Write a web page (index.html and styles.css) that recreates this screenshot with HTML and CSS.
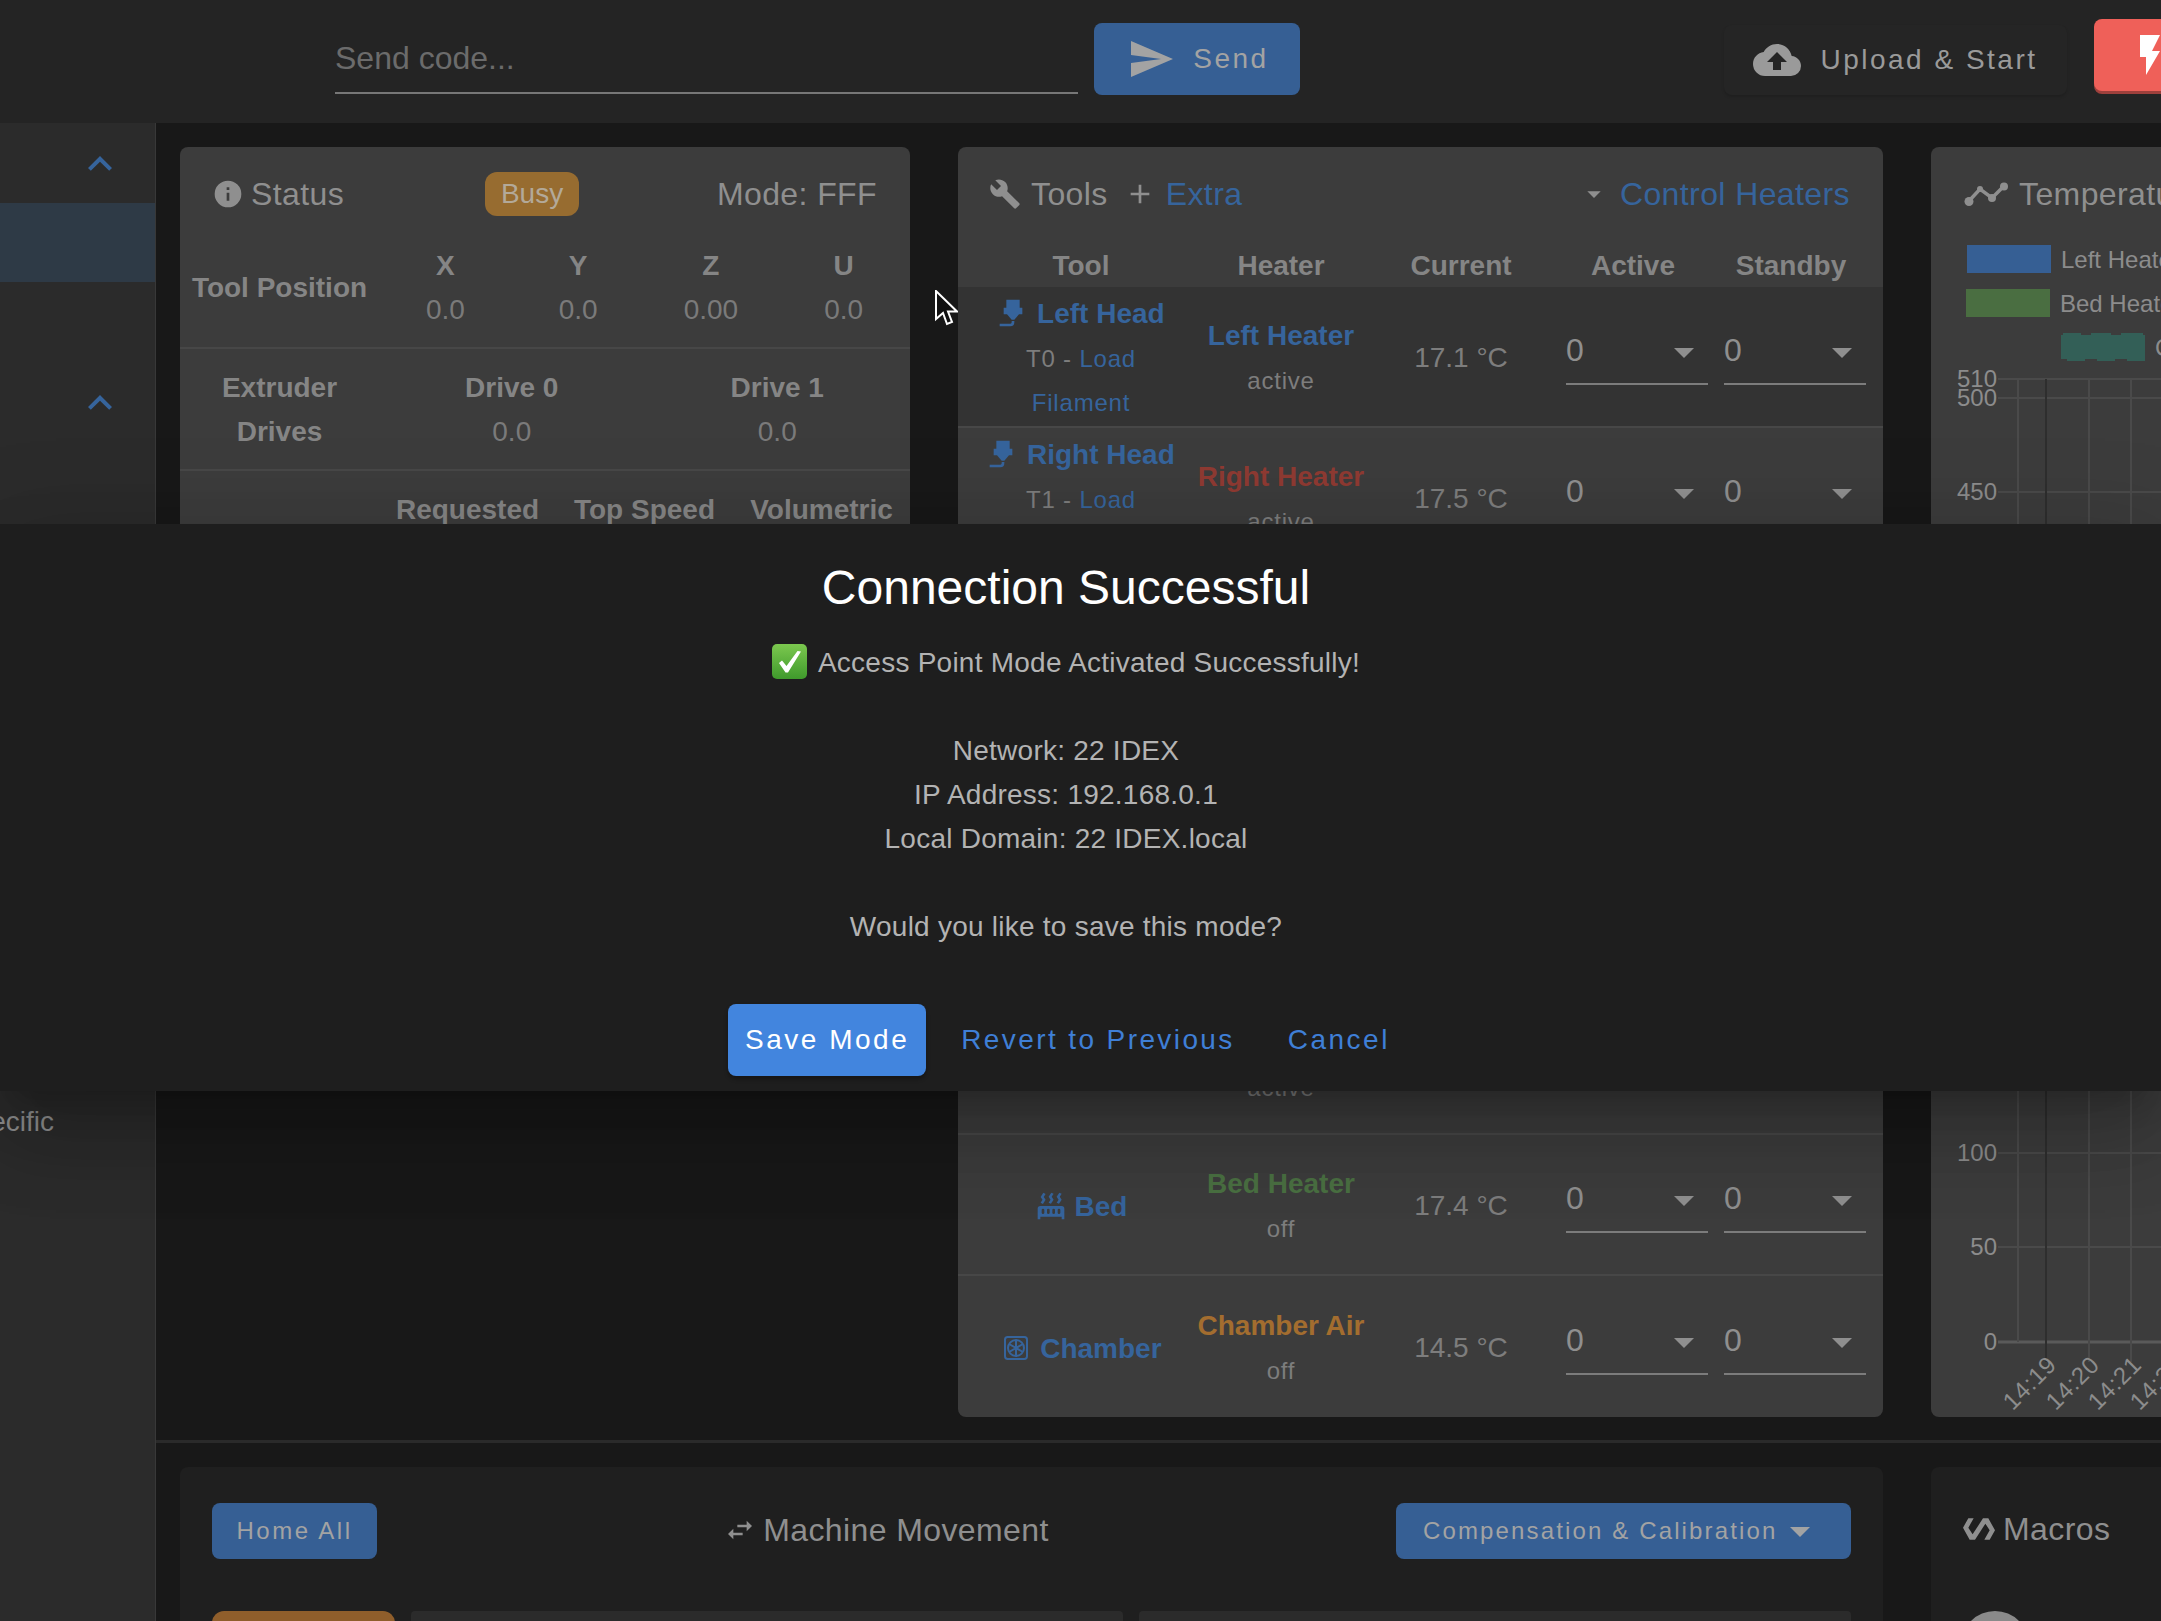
FILE: index.html
```html
<!DOCTYPE html>
<html>
<head>
	<meta charset="UTF-8">
	<title>Printer Dashboard</title>
	<link rel="stylesheet" href="styles.css">
</head>
<body>

	<div class="topbar">
		<div class="code_input">Send code...</div>
		<div class="btn send_btn">
			<svg class="icon icon48" viewBox="0 0 24 24"><path d="M2,21L23,12L2,3V10L17,12L2,14V21Z"/></svg>
			<span>Send</span>
		</div>
		<div class="btn upload_btn">
			<svg class="icon icon48" viewBox="0 0 24 24"><path d="M14,13V17H10V13H7L12,8L17,13M19.35,10.03C18.67,6.59 15.64,4 12,4C9.11,4 6.6,5.64 5.35,8.03C2.34,8.36 0,10.9 0,14A6,6 0 0,0 6,20H19A5,5 0 0,0 24,15C24,12.36 21.95,10.22 19.35,10.03Z"/></svg>
			<span>Upload &amp; Start</span>
		</div>
		<div class="btn stop_btn">
			<svg class="icon icon48" viewBox="0 0 24 24"><path d="M7,2V13H10V22L17,10H13L17,2H7Z"/></svg>
		</div>
	</div>

	<div class="page">
		<div class="sidebar">
			<svg class="icon icon48 side_chevron" viewBox="0 0 24 24"><path d="M7.41,15.41L12,10.83L16.59,15.41L18,14L12,8L6,14L7.41,15.41Z"/></svg>
			<div class="side_active"></div>
			<svg class="icon icon48 side_chevron second" viewBox="0 0 24 24"><path d="M7.41,15.41L12,10.83L16.59,15.41L18,14L12,8L6,14L7.41,15.41Z"/></svg>
			<div class="side_label"><span>Machine-Specific</span></div>
		</div>

		<div class="content">
			<div class="top_grid">

				<div class="card status_card">
					<div class="card_head">
						<div class="title">
							<svg class="icon icon32" viewBox="0 0 24 24"><path d="M13,9H11V7H13M13,17H11V11H13M12,2A10,10 0 0,0 2,12A10,10 0 0,0 12,22A10,10 0 0,0 22,12A10,10 0 0,0 12,2Z"/></svg>
							<span class="status_text">Status</span>
						</div>
						<div class="chip">Busy</div>
						<div class="title">Mode: FFF</div>
					</div>
					<div class="status_row pos_row">
						<div class="th row_name">Tool Position</div>
						<div class="cell"><div class="th">X</div><div class="val">0.0</div></div>
						<div class="cell"><div class="th">Y</div><div class="val">0.0</div></div>
						<div class="cell"><div class="th">Z</div><div class="val">0.00</div></div>
						<div class="cell"><div class="th">U</div><div class="val">0.0</div></div>
					</div>
					<div class="status_row drive_row">
						<div class="th row_name">Extruder<br>Drives</div>
						<div class="cell"><div class="th">Drive 0</div><div class="val">0.0</div></div>
						<div class="cell"><div class="th">Drive 1</div><div class="val">0.0</div></div>
					</div>
					<div class="status_row speed_row">
						<div></div>
						<div class="cell"><div class="th">Requested</div></div>
						<div class="cell"><div class="th">Top Speed</div></div>
						<div class="cell"><div class="th">Volumetric</div></div>
					</div>
				</div>

				<div class="card">
					<div class="card_head tools_head">
						<div class="title">
							<svg class="icon icon32" viewBox="0 0 24 24"><path d="M22.7,19L13.6,9.9C14.5,7.6 14,4.9 12.1,3C10.1,1 7.1,0.6 4.7,1.7L9,6L6,9L1.6,4.7C0.4,7.1 0.9,10.1 2.9,12.1C4.8,14 7.5,14.5 9.8,13.6L18.9,22.7C19.3,23.1 19.9,23.1 20.3,22.7L22.6,20.4C23.1,20 23.1,19.3 22.7,19Z"/></svg>
							<span class="tools_text">Tools</span>
							<svg class="icon icon32 plus" viewBox="0 0 24 24"><path d="M19,13H13V19H11V13H5V11H11V5H13V11H19V13Z"/></svg>
							<span class="link extra">Extra</span>
						</div>
						<div class="title">
							<svg class="icon icon32" viewBox="0 0 24 24"><path d="M7,10L12,15L17,10H7Z"/></svg>
							<span class="link control">Control Heaters</span>
						</div>
					</div>

					<div class="tools_header">
						<div class="th">Tool</div>
						<div class="th">Heater</div>
						<div class="th">Current</div>
						<div class="th">Active</div>
						<div class="th">Standby</div>
					</div>

					<div class="tool_row dark_row">
						<div class="tool_cell">
							<div class="tool_name"><svg class="icon icon32" viewBox="0 0 24 24"><path d="M7,2H17V8H19V13H16.5L13,17H11L7.5,13H5V8H7V2M10,22H2V20H10A1,1 0 0,0 11,19V18H13V19A3,3 0 0,1 10,22Z"/></svg> Left Head</div>
							<div class="small">T0 - <span class="link">Load<br>Filament</span></div>
						</div>
						<div class="heater_cell">
							<div class="heater blue">Left Heater</div>
							<div class="small">active</div>
						</div>
						<div class="temp_cell">17.1 °C</div>
						<div class="select_cell">
							<div class="select">0<svg class="icon icon48" viewBox="0 0 24 24"><path d="M7,10L12,15L17,10H7Z"/></svg></div>
							<div class="select">0<svg class="icon icon48" viewBox="0 0 24 24"><path d="M7,10L12,15L17,10H7Z"/></svg></div>
						</div>
					</div>

					<div class="tool_row">
						<div class="tool_cell">
							<div class="tool_name"><svg class="icon icon32" viewBox="0 0 24 24"><path d="M7,2H17V8H19V13H16.5L13,17H11L7.5,13H5V8H7V2M10,22H2V20H10A1,1 0 0,0 11,19V18H13V19A3,3 0 0,1 10,22Z"/></svg> Right Head</div>
							<div class="small">T1 - <span class="link">Load<br>Filament</span></div>
						</div>
						<div class="heater_cell">
							<div class="heater red">Right Heater</div>
							<div class="small">active</div>
						</div>
						<div class="temp_cell">17.5 °C</div>
						<div class="select_cell">
							<div class="select">0<svg class="icon icon48" viewBox="0 0 24 24"><path d="M7,10L12,15L17,10H7Z"/></svg></div>
							<div class="select">0<svg class="icon icon48" viewBox="0 0 24 24"><path d="M7,10L12,15L17,10H7Z"/></svg></div>
						</div>
					</div>

					<!-- rows behind the dialog -->
					<div class="hidden_rows"></div>

					<div class="tool_row">
						<div class="tool_cell"></div>
						<div class="heater_cell">
							<div class="heater"></div>
							<div class="small">active</div>
						</div>
					</div>

					<div class="tool_row">
						<div class="tool_cell">
							<div class="tool_name"><svg class="icon icon32" viewBox="0 0 24 24"><path d="M7.95,3L6.53,5.19L7.95,7.4H7.94L5.95,10.5L4.22,9.6L5.64,7.39L4.22,5.19L6.22,2.09L7.95,3M13.95,2.89L12.53,5.1L13.95,7.3L13.94,7.31L11.95,10.4L10.22,9.5L11.64,7.3L10.22,5.1L12.22,2L13.95,2.89M20,2.89L18.56,5.1L20,7.3V7.31L18,10.4L16.25,9.5L17.67,7.3L16.25,5.1L18.25,2L20,2.89M2,22V14A2,2 0 0,1 4,12H20A2,2 0 0,1 22,14V22H20V20H4V22H2M6,14A1,1 0 0,0 5,15V17A1,1 0 0,0 6,18A1,1 0 0,0 7,17V15A1,1 0 0,0 6,14M10,14A1,1 0 0,0 9,15V17A1,1 0 0,0 10,18A1,1 0 0,0 11,17V15A1,1 0 0,0 10,14M14,14A1,1 0 0,0 13,15V17A1,1 0 0,0 14,18A1,1 0 0,0 15,17V15A1,1 0 0,0 14,14M18,14A1,1 0 0,0 17,15V17A1,1 0 0,0 18,18A1,1 0 0,0 19,17V15A1,1 0 0,0 18,14Z"/></svg> Bed</div>
						</div>
						<div class="heater_cell">
							<div class="heater green">Bed Heater</div>
							<div class="small">off</div>
						</div>
						<div class="temp_cell">17.4 °C</div>
						<div class="select_cell">
							<div class="select">0<svg class="icon icon48" viewBox="0 0 24 24"><path d="M7,10L12,15L17,10H7Z"/></svg></div>
							<div class="select">0<svg class="icon icon48" viewBox="0 0 24 24"><path d="M7,10L12,15L17,10H7Z"/></svg></div>
						</div>
					</div>

					<div class="tool_row last_row">
						<div class="tool_cell">
							<div class="tool_name"><svg class="icon32 chamber_icon" viewBox="0 0 24 24"><rect x="3.750" y="3.750" width="16.500" height="16.500" rx="2"/><circle cx="12" cy="12" r="6"/><path d="M12,6V18M6.800,9L17.200,15M6.800,15L17.200,9"/></svg> Chamber</div>
						</div>
						<div class="heater_cell">
							<div class="heater orange">Chamber Air</div>
							<div class="small">off</div>
						</div>
						<div class="temp_cell">14.5 °C</div>
						<div class="select_cell">
							<div class="select">0<svg class="icon icon48" viewBox="0 0 24 24"><path d="M7,10L12,15L17,10H7Z"/></svg></div>
							<div class="select">0<svg class="icon icon48" viewBox="0 0 24 24"><path d="M7,10L12,15L17,10H7Z"/></svg></div>
						</div>
					</div>
				</div>

				<div class="card chart_card">
					<div class="card_head chart_head">
						<div class="title">
							<svg class="chart_icon" viewBox="0 0 44 24"><polyline points="5,19 16,7 28,16 40,4" fill="none" stroke="currentColor" stroke-width="3.500"/><circle cx="5" cy="19.500" r="4.500"/><circle cx="16" cy="7" r="3"/><circle cx="28" cy="16" r="4"/><circle cx="40" cy="4.500" r="4"/></svg>
							<span class="chart_text">Temperature Chart</span>
						</div>
					</div>
					<!-- same origin as the card: x - 1931, y - 227 -->
					<svg class="chart" width="240" height="1190" viewBox="0 0 240 1190">
						<rect x="36" y="18" width="84" height="28" fill="#365f94"/>
						<text x="130" y="41" class="chart_txt">Left Heater</text>
						<rect x="35" y="62" width="84" height="28" fill="#4a6e41"/>
						<text x="129" y="85" class="chart_txt">Bed Heater</text>
						<polygon points="132,106 150,106 150,108 160,108 160,106 180,106 180,108 190,108 190,106 212,106 212,108 214,108 214,134 196,134 196,132 184,132 184,134 166,134 166,132 154,132 154,134 136,134 136,132 130,132 130,108 132,108" fill="#335f57"/>
						<text x="224" y="129" class="chart_txt">Chamber Air</text>

						<g stroke="#4a4a4a" stroke-width="2">
							<line x1="67" y1="152" x2="240" y2="152"/>
							<line x1="67" y1="171" x2="240" y2="171"/>
							<line x1="67" y1="265" x2="240" y2="265"/>
							<line x1="67" y1="926" x2="240" y2="926"/>
							<line x1="67" y1="1020" x2="240" y2="1020"/>
							<line x1="67" y1="1115" x2="240" y2="1115" stroke="#5a5a5a" stroke-width="3"/>
							<line x1="87" y1="152" x2="87" y2="1115"/>
							<line x1="115" y1="152" x2="115" y2="1135" stroke="#2e2e2e"/>
							<line x1="158" y1="152" x2="158" y2="1135"/>
							<line x1="200" y1="152" x2="200" y2="1135"/>
						</g>

						<text x="66" y="160" class="chart_txt axis">510</text>
						<text x="66" y="179" class="chart_txt axis">500</text>
						<text x="66" y="273" class="chart_txt axis">450</text>
						<text x="66" y="934" class="chart_txt axis">100</text>
						<text x="66" y="1028" class="chart_txt axis">50</text>
						<text x="66" y="1123" class="chart_txt axis">0</text>

						<text class="chart_txt axis tick" transform="translate(127,1139) rotate(-45)">14:19</text>
						<text class="chart_txt axis tick" transform="translate(170,1139) rotate(-45)">14:20</text>
						<text class="chart_txt axis tick" transform="translate(212,1139) rotate(-45)">14:21</text>
						<text class="chart_txt axis tick" transform="translate(254,1139) rotate(-45)">14:22</text>
					</svg>
				</div>
			</div>

			<div class="divider"></div>

			<div class="bottom_grid">
				<div class="card dark_card">
					<div class="move_head">
						<div class="btn small_btn home_btn">Home All</div>
						<div class="title">
							<svg class="icon icon32" viewBox="0 0 24 24"><path d="M21,9L17,5V8H10V10H17V13M7,11L3,15L7,19V16H14V14H7V11Z"/></svg>
							<span>Machine Movement</span>
						</div>
						<div class="btn small_btn comp_btn">
							<span>Compensation &amp; Calibration</span>
							<svg class="icon icon48" viewBox="0 0 24 24"><path d="M7,10L12,15L17,10H7Z"/></svg>
						</div>
					</div>
					<div class="move_bars">
						<div class="orange_bar"></div>
						<div class="grey_bar"></div>
						<div class="grey_bar"></div>
					</div>
				</div>
				<div class="card dark_card">
					<div class="macros_head">
						<div class="title">
							<svg class="icon icon32" viewBox="0 0 24 24"><path d="M19,4H15L7.210,16L4,11L8,4H4L0,11L5,20H9L16.790,8L20,13L16,20H20L24,13L19,4Z"/></svg>
							<span class="macros_text">Macros</span>
						</div>
					</div>
					<div class="macro_circle"></div>
				</div>
			</div>
		</div>
	</div>

	<svg class="cursor" width="24" height="36" viewBox="0 0 24 36"><path d="M2,1V29L9,23L13,34L18,32L14,21.500H23Z" fill="#111" stroke="#fff" stroke-width="2"/></svg>

	<div class="dialog">
		<div class="dialog_title">Connection Successful</div>
		<div class="dialog_text">
			<svg class="emoji" viewBox="0 0 35 35"><defs><linearGradient id="emoji_green" x1="0" y1="0" x2="0" y2="1"><stop offset="0" stop-color="#7cc84f"/><stop offset="1" stop-color="#3f9a2c"/></linearGradient></defs><rect width="35" height="35" rx="5" fill="url(#emoji_green)"/><path d="M7,19L10,16.500L14.500,22L25.500,7L29,7.500L16,28.500H13.500Z" fill="#fff"/></svg>Access Point Mode Activated Successfully!<br>
			<br>
			Network: 22 IDEX<br>
			IP Address: 192.168.0.1<br>
			Local Domain: 22 IDEX.local<br>
			<br>
			Would you like to save this mode?
		</div>
		<div class="dialog_actions">
			<div class="btn save_btn">Save Mode</div>
			<div class="btn text_btn revert_btn">Revert to Previous</div>
			<div class="btn text_btn">Cancel</div>
		</div>
	</div>

</body>
</html>
```

FILE: styles.css
```css
body{
	margin: 0;
	width: 2161px;
	height: 1621px;
	overflow: hidden;
	position: relative;
	background: #181818;
	font-family: "Liberation Sans", Arial, sans-serif;
	font-size: 28px;
	line-height: 44px;
	color: #8c8c8c;
}

.icon{
	fill: currentColor;
	flex-shrink: 0;
}
.icon32{
	width: 32px;
	height: 32px;
}
.icon48{
	width: 48px;
	height: 48px;
}

.btn{
	display: flex;
	align-items: center;
	justify-content: center;
	flex-shrink: 0;
	letter-spacing: 2.5px;
	border-radius: 8px;
}

/* top bar */
.topbar{
	display: flex;
	height: 123px;
	padding-left: 335px;
	background: #242424;
	box-sizing: border-box;
}
.code_input{
	width: 743px;
	height: 56px;
	margin-top: 36px;
	flex-shrink: 0;
	font-size: 32px;
	color: #6b6b6b;
	border-bottom: 2px solid #777;
}
.send_btn{
	width: 206px;
	height: 72px;
	margin: 23px 0 0 16px;
	padding-left: 2px;
	gap: 18px;
	box-sizing: border-box;
	background: #365f94;
	color: #a3a3a3;
}
.upload_btn{
	width: 343px;
	height: 70px;
	margin: 25px 0 0 424px;
	gap: 19px;
	background: #252525;
	color: #9a9a9a;
	box-shadow: 0 2px 3px rgba(0,0,0,0.15);
}
.stop_btn{
	width: 130px;
	height: 72px;
	margin: 19px 0 0 27px;
	justify-content: flex-start;
	padding-left: 32px;
	box-sizing: border-box;
	background: #ef6059;
	color: #fff;
	box-shadow: 0 3px 0 #9e403c;
}

/* layout */
.page{
	display: flex;
	height: 1498px;
}
.sidebar{
	width: 156px;
	flex-shrink: 0;
	padding-top: 17px;
	box-sizing: border-box;
	background: #2b2b2b;
	border-right: 1px solid #383838;
	color: #36649c;
}
.side_chevron{
	display: block;
	margin-left: 76px;
}
.side_chevron.second{
	margin-top: 97px;
}
.side_active{
	height: 79px;
	margin-top: 15px;
	background: #2e3a46;
}
.side_label{
	display: flex;
	justify-content: flex-end;
	margin-top: 673px;
	padding-right: 101px;
	white-space: nowrap;
	color: #8e8e8e;
}
.content{
	padding: 24px 0 0 24px;
	width: 2005px;
	flex-shrink: 0;
	box-sizing: border-box;
}
.top_grid{
	display: grid;
	grid-template-columns: 730px 925px 300px;
	grid-template-rows: 1270px;
	column-gap: 48px;
}
.divider{
	height: 3px;
	margin: 23px 0 24px -24px;
	background: #2a2a2a;
}
.bottom_grid{
	display: grid;
	grid-template-columns: 1703px 300px;
	column-gap: 48px;
	height: 300px;
}

/* cards */
.card{
	background: #3c3c3c;
	border-radius: 8px;
	overflow: hidden;
}
.status_card{
	align-self: start;
	height: 700px;
}
.dark_card{
	background: #1f1f1f;
}
.card_head{
	display: flex;
	align-items: center;
	justify-content: space-between;
	height: 80px;
	padding: 25px 33px 11px 32px;
	box-sizing: border-box;
}
.title{
	display: flex;
	align-items: center;
	font-size: 32px;
	letter-spacing: 0.4px;
	color: #8f8f8f;
	white-space: nowrap;
}
.status_text{
	margin-left: 7px;
}
.chip{
	width: 94px;
	height: 44px;
	margin-left: 3px;
	text-align: center;
	background: #976c30;
	border-radius: 12px;
	color: #b3a999;
}
.link{
	color: #36649c;
}
.th{
	font-weight: bold;
	color: #858585;
}
.val{
	color: #7a7a7a;
}

/* status */
.status_row{
	display: grid;
	padding: 17px 0 15px;
	border-bottom: 2px solid #474747;
	text-align: center;
}
.pos_row{
	grid-template-columns: 199px repeat(4, 1fr);
}
.drive_row{
	grid-template-columns: 199px repeat(2, 1fr);
}
.speed_row{
	grid-template-columns: 199px repeat(3, 1fr);
	border-bottom: 0;
}
.row_name{
	align-self: center;
}

/* tools */
.tools_head{
	padding-left: 31px;
}
.tools_text{
	margin-left: 10px;
}
.plus{
	margin-left: 16px;
}
.extra{
	margin-left: 10px;
}
.control{
	margin-left: 10px;
}
.tools_header{
	display: grid;
	grid-template-columns: 246px 154px 206px 138px 178px;
	height: 42px;
	line-height: 42px;
	margin-top: 18px;
	text-align: center;
	white-space: nowrap;
}
.tool_row{
	display: grid;
	grid-template-columns: 246px 154px 206px 1fr;
	align-items: center;
	height: 141px;
	box-sizing: border-box;
	border-bottom: 2px solid #474747;
	text-align: center;
}
.dark_row{
	background: #333;
}
.last_row{
	border-bottom: 0;
}
.hidden_rows{
	height: 425px;
}
.tool_cell, .heater_cell{
	padding-top: 4px;
}
.temp_cell{
	padding-top: 3px;
}
.tool_name{
	font-weight: bold;
	color: #36649c;
	white-space: nowrap;
}
.tool_name .icon32{
	vertical-align: -6px;
}
.chamber_icon{
	fill: none;
	stroke: currentColor;
	stroke-width: 1.5;
}
.small{
	margin-top: 1px;
	font-size: 24px;
	letter-spacing: 0.8px;
	color: #7d7d7d;
}
.heater_cell{
	white-space: nowrap;
	display: flex;
	flex-direction: column;
	align-items: center;
}
.heater{
	font-weight: bold;
	min-height: 44px;
}
.blue{
	color: #36649c;
}
.red{
	color: #8f3a32;
}
.green{
	color: #4a7042;
}
.orange{
	color: #a36d2f;
}
.temp_cell{
	color: #7d7d7d;
}
.select_cell{
	display: flex;
	gap: 16px;
	padding-left: 2px;
}
.select{
	display: flex;
	justify-content: space-between;
	width: 142px;
	height: 57px;
	box-sizing: border-box;
	text-align: left;
	font-size: 32px;
	color: #8f8f8f;
	border-bottom: 2px solid #7c7c7c;
}

/* chart */
.chart_head{
	padding-left: 33px;
}
.chart_icon{
	width: 44px;
	height: 24px;
	fill: currentColor;
}
.chart_text{
	margin-left: 11px;
}
.chart{
	display: block;
}
.chart_txt{
	font-size: 24px;
	fill: #8c8c8c;
}
.axis{
	text-anchor: end;
}
.tick{
	letter-spacing: 0.8px;
}

/* lower row */
.move_head{
	display: flex;
	justify-content: space-between;
	align-items: center;
	padding: 36px 32px 0;
}
.move_head .title{
	margin-top: -2px;
}
.move_head .icon32{
	margin-right: 7px;
}
.small_btn{
	width: 165px;
	height: 56px;
	font-size: 24px;
	letter-spacing: 2.14px;
	background: #365f94;
	color: #a3a3a3;
}
.home_btn{
	letter-spacing: 2.5px;
}
.comp_btn{
	width: 455px;
	justify-content: flex-start;
	padding-left: 27px;
	box-sizing: border-box;
}
.comp_btn .icon48{
	margin-left: -1px;
}
.move_bars{
	display: grid;
	grid-template-columns: 183px 712px 712px;
	column-gap: 16px;
	margin: 52px 32px 0;
	height: 80px;
}
.orange_bar{
	background: #8f5e2b;
	border-radius: 12px 12px 0 0;
}
.grey_bar{
	background: #2b2b2b;
	border-radius: 4px 4px 0 0;
}
.macros_head{
	display: flex;
	padding: 34px 32px 0;
	height: 56px;
	align-items: center;
}
.macros_text{
	margin-left: 8px;
}
.macro_circle{
	width: 68px;
	height: 68px;
	margin: 54px 0 0 30px;
	border-radius: 50%;
	background: #8a8a8a;
}

/* dialog sits over the page */
.dialog{
	position: absolute;
	left: 0;
	right: 0;
	top: 524px;
	height: 567px;
	padding: 32px 29px 0 0;
	box-sizing: border-box;
	background: #1e1e1e;
	text-align: center;
	color: #b3b3b3;
	box-shadow: 0 22px 30px -14px rgba(0,0,0,0.2), 0 48px 76px 6px rgba(0,0,0,0.14), 0 18px 92px 16px rgba(0,0,0,0.12);
}
.dialog_title{
	font-size: 48px;
	line-height: 64px;
	color: #fff;
}
.dialog_text{
	margin-top: 21px;
	letter-spacing: 0.24px;
}
.emoji{
	width: 35px;
	height: 35px;
	margin-right: 11px;
	vertical-align: -7px;
}
.dialog_actions{
	display: flex;
	justify-content: center;
	gap: 17px;
	margin: 55px 0 0 4px;
}
.save_btn{
	height: 72px;
	padding: 0 17px;
	background: #4285de;
	color: #fff;
	box-shadow: 0 3px 4px rgba(0,0,0,0.3);
}
.text_btn{
	height: 72px;
	padding: 0 18px;
	color: #3f7fd6;
}
.revert_btn{
	letter-spacing: 2.4px;
}

.cursor{
	position: absolute;
	left: 934px;
	top: 290px;
}
```
